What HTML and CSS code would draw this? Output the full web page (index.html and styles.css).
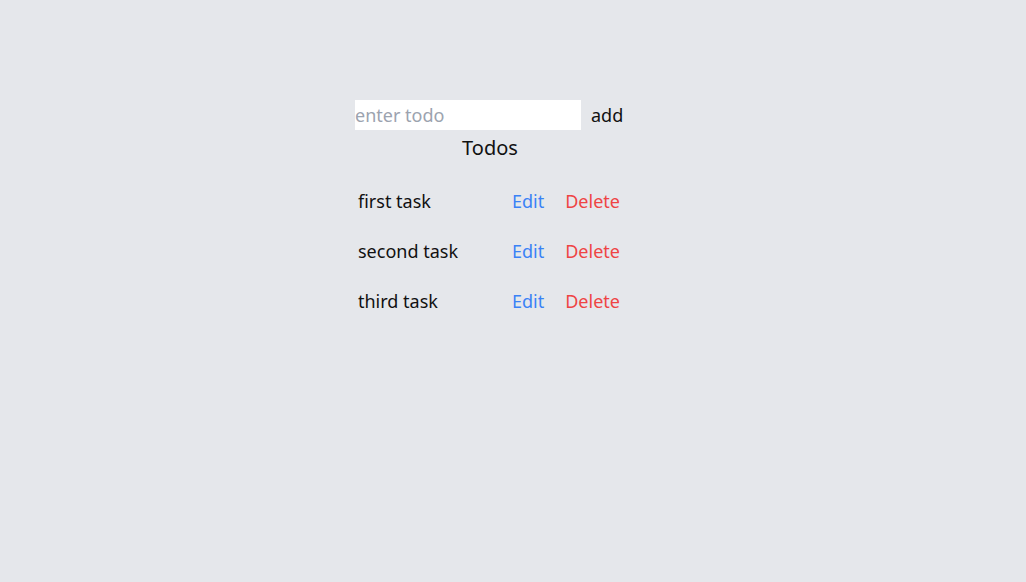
FILE: index.html
```html
<!DOCTYPE html>
<html>
<head>
<meta charset="utf-8">
<link rel="stylesheet" href="styles.css">
</head>
<body>
<div class="app">
  <div class="form">
    <input class="input" type="text" placeholder="enter todo">
    <button class="add">add</button>
  </div>
  <h1 class="title">Todos</h1>
  <ul class="list">
    <li class="row"><span class="text">first task</span><button class="edit">Edit</button><button class="delete">Delete</button></li>
    <li class="row"><span class="text">second task</span><button class="edit">Edit</button><button class="delete">Delete</button></li>
    <li class="row"><span class="text">third task</span><button class="edit">Edit</button><button class="delete">Delete</button></li>
  </ul>
</div>
</body>
</html>
```
FILE: styles.css
```css
* { box-sizing: border-box; }
html, body { margin: 0; padding: 0; }
body {
  background: #e5e7eb;
  font-family: "Noto Sans", sans-serif;
  color: #111;
  font-size: 18px;
  height: 582px;
}
.app {
  width: 270px;
  margin-left: 355px;
  padding-top: 100px;
  display: flex;
  flex-direction: column;
}
.form {
  display: flex;
  align-items: center;
  gap: 10px;
  height: 30px;
}
.input {
  width: 226px;
  height: 30px;
  border: none;
  outline: none;
  padding: 0;
  font: inherit;
  font-size: 18px;
  background: #fff;
  color: #111;
}
.input::placeholder { color: #9ca3af; }
.add {
  border: none;
  background: none;
  font: inherit;
  padding: 0;
  color: #111;
}
.title {
  margin: 4px 0 0 0;
  font-weight: 400;
  font-size: 20px;
  text-align: center;
  width: 270px;
  line-height: 28px;
}
.list {
  list-style: none;
  margin: 25px 0 0 0;
  padding: 0 0 0 3px;
  display: flex;
  flex-direction: column;
  gap: 22px;
}
.row {
  display: flex;
  align-items: center;
  height: 28px;
}
.text { width: 154px; }
.row button {
  border: none;
  background: none;
  font: inherit;
  padding: 0;
}
.edit { color: #3b82f6; margin-right: 21px; }
.delete { color: #ef4444; }
```
